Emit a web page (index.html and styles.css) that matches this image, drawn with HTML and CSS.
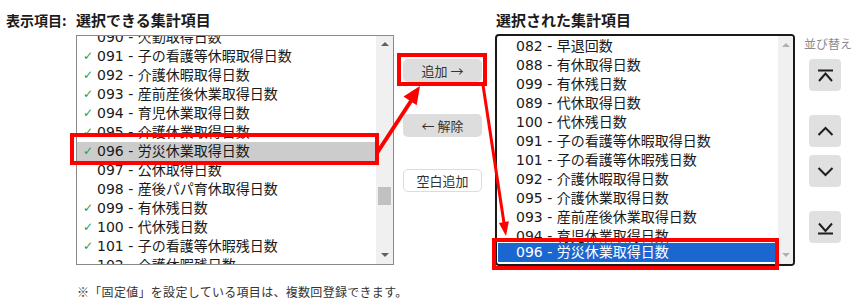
FILE: index.html
```html
<!DOCTYPE html>
<html lang="ja">
<head>
  <meta charset="UTF-8" />
  <title>集計項目の選択</title>
  <link rel="stylesheet" href="styles.css">
</head>
<body>
  <div class="page">
    <div class="fieldLabel">表示項目:</div>

    <!-- 選択できる集計項目 -->
    <div class="panel panelLeft">
      <div class="panelTitle">選択できる集計項目</div>
      <div class="listBox srcBox">
        <ul class="items srcItems">
          <li class="item"><span class="check"></span>090 - 欠勤取得日数</li>
          <li class="item"><span class="check">✓</span>091 - 子の看護等休暇取得日数</li>
          <li class="item"><span class="check">✓</span>092 - 介護休暇取得日数</li>
          <li class="item"><span class="check">✓</span>093 - 産前産後休業取得日数</li>
          <li class="item"><span class="check">✓</span>094 - 育児休業取得日数</li>
          <li class="item"><span class="check">✓</span>095 - 介護休業取得日数</li>
          <li class="item current"><span class="check">✓</span>096 - 労災休業取得日数</li>
          <li class="item"><span class="check"></span>097 - 公休取得日数</li>
          <li class="item"><span class="check"></span>098 - 産後パパ育休取得日数</li>
          <li class="item"><span class="check">✓</span>099 - 有休残日数</li>
          <li class="item"><span class="check">✓</span>100 - 代休残日数</li>
          <li class="item"><span class="check">✓</span>101 - 子の看護等休暇残日数</li>
          <li class="item"><span class="check"></span>102 - 介護休暇残日数</li>
        </ul>
        <div class="scrollbar">
          <span class="arrowUp"></span>
          <span class="thumb"></span>
          <span class="arrowDown"></span>
        </div>
      </div>
      <p class="note">※「固定値」を設定している項目は、複数回登録できます。</p>
    </div>

    <!-- 追加 / 解除 -->
    <div class="moveButtons">
      <button class="btn btnGray">追加 →</button>
      <button class="btn btnGray">← 解除</button>
      <button class="btn btnWhite">空白追加</button>
    </div>

    <!-- 選択された集計項目 -->
    <div class="panel panelRight">
      <div class="panelTitle">選択された集計項目</div>
      <div class="listBox dstBox">
        <ul class="items dstItems">
          <li class="item">082 - 早退回数</li>
          <li class="item">088 - 有休取得日数</li>
          <li class="item">099 - 有休残日数</li>
          <li class="item">089 - 代休取得日数</li>
          <li class="item">100 - 代休残日数</li>
          <li class="item">091 - 子の看護等休暇取得日数</li>
          <li class="item">101 - 子の看護等休暇残日数</li>
          <li class="item">092 - 介護休暇取得日数</li>
          <li class="item">095 - 介護休業取得日数</li>
          <li class="item">093 - 産前産後休業取得日数</li>
          <li class="item cut">094 - 育児休業取得日数</li>
          <li class="item selected">096 - 労災休業取得日数</li>
        </ul>
        <div class="scrollbar light">
          <span class="arrowUp"></span>
          <span class="arrowDown"></span>
        </div>
      </div>
    </div>

    <!-- 並び替え -->
    <div class="sort">
      <div class="sortTitle">並び替え</div>
      <button class="sortBtn toTop">
        <svg width="32" height="32" viewBox="0 0 32 32"><path d="M9 11.5H24M10 22L16.5 14.5L23 22" /></svg>
      </button>
      <button class="sortBtn up">
        <svg width="32" height="32" viewBox="0 0 32 32"><path d="M9.5 20L16.5 13L23.5 20" /></svg>
      </button>
      <button class="sortBtn down">
        <svg width="32" height="32" viewBox="0 0 32 32"><path d="M9.5 13L16.5 20L23.5 13" /></svg>
      </button>
      <button class="sortBtn toBottom">
        <svg width="32" height="32" viewBox="0 0 32 32"><path d="M10 12.5L16.5 20L23 12.5M9 22.5H24" /></svg>
      </button>
    </div>

    <!-- annotation overlay -->
    <svg class="marks" width="864" height="303" viewBox="0 0 864 303">
      <g fill="none" stroke="#ff0000" stroke-width="4">
        <rect x="72" y="135" width="305" height="28" />
        <rect x="399" y="55" width="86" height="29" />
        <rect x="494" y="240" width="283" height="28" />
        <line x1="377" y1="153" x2="411" y2="101" />
      </g>
      <line x1="483" y1="85" x2="504" y2="223" stroke="#ff0000" stroke-width="3" />
      <g fill="#ff0000">
        <polygon points="420,86 403.5,96.5 416.7,105.3" />
        <polygon points="506,236 498.9,222.9 508.9,221.3" />
      </g>
    </svg>
  </div>
</body>
</html>
```

FILE: styles.css
```css
body {
  margin: 0;
  background: #fff;
  font-family: "Noto Sans CJK JP", "DejaVu Sans", sans-serif;
  color: #1a1a1a;
}
.page {
  position: relative;
  display: flex;
  align-items: flex-start;
  width: 864px;
  height: 303px;
  padding: 10px 0 0 6px;
  box-sizing: border-box;
  overflow: hidden;
}
.fieldLabel {
  width: 70px;
  flex: none;
  font-size: 14px;
  font-weight: bold;
  line-height: 20px;
}
.panel {
  flex: none;
}
.panelLeft {
  width: 318px;
}
.panelRight {
  width: 300px;
}
.panelTitle {
  font-size: 15px;
  font-weight: bold;
  line-height: 20px;
  margin-bottom: 5px;
}
.panelRight .panelTitle {
  margin-left: 1px;
  margin-bottom: 4px;
}
.listBox {
  display: flex;
  box-sizing: border-box;
  background: #fff;
  overflow: hidden;
}
.srcBox {
  width: 318px;
  height: 230px;
  border: 1px solid #8a8a8a;
}
.dstBox {
  width: 300px;
  height: 232px;
  border: 2px solid #1a1a1a;
  border-radius: 4px;
}
.items {
  flex: 1;
  margin: 0;
  padding: 0;
  list-style: none;
  overflow: hidden;
}
.srcItems {
  margin-top: -8px;
}
.dstItems {
  margin-top: 1px;
}
.item {
  display: flex;
  align-items: center;
  height: 19px;
  font-family: "DejaVu Sans", "Noto Sans CJK JP", sans-serif;
  font-size: 14px;
  line-height: 19px;
  white-space: nowrap;
  overflow: hidden;
}
.srcItems .item {
  padding-left: 6px;
}
.dstItems .item {
  padding-left: 19px;
}
.check {
  width: 14px;
  flex: none;
  color: #2a9a48;
  font-size: 12px;
  font-weight: bold;
}
.item.current {
  background: #cccccc;
}
.item.cut {
  height: 16px;
  align-items: flex-start;
}
.item.selected {
  background: #1b67d2;
  color: #fff;
  margin-left: 1px;
  padding-left: 18px;
}
.scrollbar {
  display: flex;
  flex-direction: column;
  align-items: center;
  width: 17px;
  flex: none;
  background: #f0f0f0;
  padding: 6px 0 7px;
  box-sizing: border-box;
}
.scrollbar.light {
  width: 15px;
  padding: 7px 0 7px;
}
.arrowUp,
.arrowDown {
  width: 0;
  height: 0;
  border-left: 4px solid transparent;
  border-right: 4px solid transparent;
}
.arrowUp {
  border-bottom: 4px solid #606060;
}
.arrowDown {
  margin-top: auto;
  border-top: 4px solid #606060;
}
.light .arrowUp {
  border-bottom-color: #b0b0b0;
}
.light .arrowDown {
  border-top-color: #b0b0b0;
}
.thumb {
  width: 13px;
  height: 18px;
  margin-top: 141px;
  background: #c1c1c1;
}
.note {
  margin: 18px 0 0 1px;
  font-size: 12px;
  line-height: 18px;
  letter-spacing: 0.3px;
  color: #333;
  white-space: nowrap;
}
.moveButtons {
  display: flex;
  flex: none;
  flex-direction: column;
  gap: 32px;
  width: 79px;
  margin: 0 13px 0 9px;
  padding-top: 49px;
}
.btn {
  height: 23px;
  padding: 0;
  font-family: inherit;
  font-size: 13px;
  color: #333;
  border-radius: 5px;
  cursor: pointer;
}
.btnGray {
  background: #dddddd;
  border: none;
}
.btnWhite {
  background: #fff;
  border: 1px solid #dcdcdc;
}
.sort {
  display: flex;
  flex: none;
  flex-direction: column;
  margin-left: 9px;
  padding-top: 26px;
}
.sortTitle {
  font-size: 12px;
  line-height: 16px;
  color: #8a8a8a;
  margin-bottom: 7px;
}
.sortBtn {
  width: 32px;
  height: 32px;
  margin-left: 5px;
  padding: 0;
  border: none;
  border-radius: 4px;
  background: #e0e0e0;
  cursor: pointer;
}
.sortBtn svg {
  display: block;
}
.sortBtn path {
  fill: none;
  stroke: #1e1e1e;
  stroke-width: 2;
}
.sortBtn.up {
  margin-top: 24px;
}
.sortBtn.down {
  margin-top: 8px;
}
.sortBtn.toBottom {
  margin-top: 24px;
}
.marks {
  position: absolute;
  left: 0;
  top: 0;
  pointer-events: none;
}
```
